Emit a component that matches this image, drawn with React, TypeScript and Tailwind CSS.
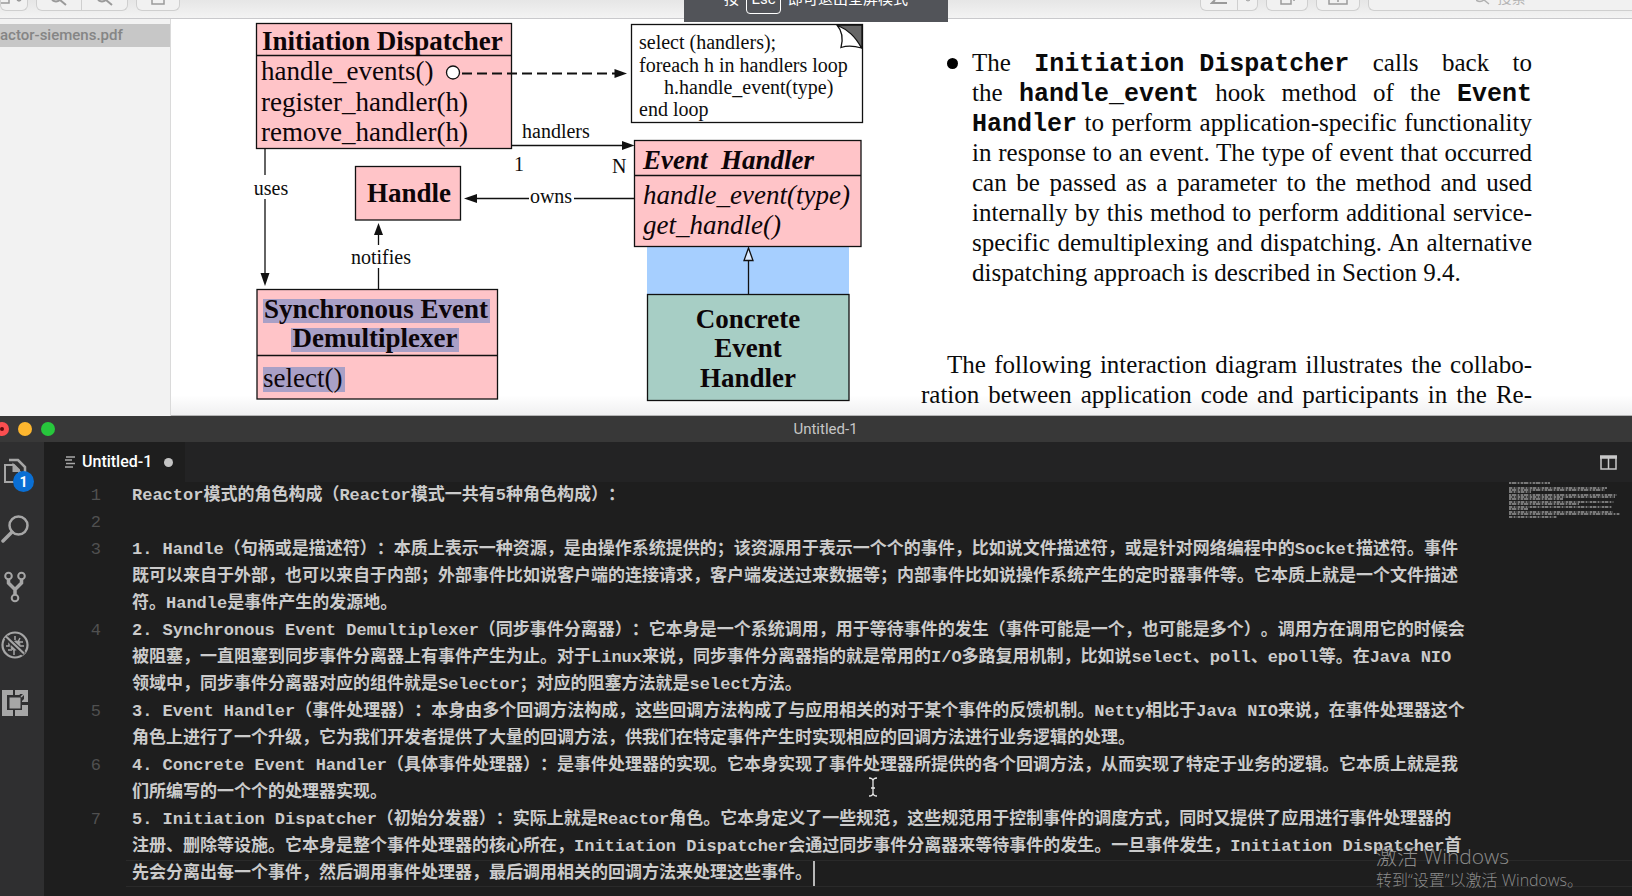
import React from "react";

const serif = "font-['Liberation_Serif',serif]";
const mono = "font-['Liberation_Mono','Noto_Sans_CJK_SC',monospace]";
const sans = "font-[Roboto,'Noto_Sans_CJK_SC',sans-serif]";

type NoteLine = { number: number; rows: string[] };

const NOTES: NoteLine[] = [
  { number: 1, rows: ["Reactor模式的角色构成（Reactor模式一共有5种角色构成）："] },
  { number: 2, rows: [""] },
  {
    number: 3,
    rows: [
      "1. Handle（句柄或是描述符）：本质上表示一种资源，是由操作系统提供的；该资源用于表示一个个的事件，比如说文件描述符，或是针对网络编程中的Socket描述符。事件",
      "既可以来自于外部，也可以来自于内部；外部事件比如说客户端的连接请求，客户端发送过来数据等；内部事件比如说操作系统产生的定时器事件等。它本质上就是一个文件描述",
      "符。Handle是事件产生的发源地。",
    ],
  },
  {
    number: 4,
    rows: [
      "2. Synchronous Event Demultiplexer（同步事件分离器）：它本身是一个系统调用，用于等待事件的发生（事件可能是一个，也可能是多个）。调用方在调用它的时候会",
      "被阻塞，一直阻塞到同步事件分离器上有事件产生为止。对于Linux来说，同步事件分离器指的就是常用的I/O多路复用机制，比如说select、poll、epoll等。在Java NIO",
      "领域中，同步事件分离器对应的组件就是Selector；对应的阻塞方法就是select方法。",
    ],
  },
  {
    number: 5,
    rows: [
      "3. Event Handler（事件处理器）：本身由多个回调方法构成，这些回调方法构成了与应用相关的对于某个事件的反馈机制。Netty相比于Java NIO来说，在事件处理器这个",
      "角色上进行了一个升级，它为我们开发者提供了大量的回调方法，供我们在特定事件产生时实现相应的回调方法进行业务逻辑的处理。",
    ],
  },
  {
    number: 6,
    rows: [
      "4. Concrete Event Handler（具体事件处理器）：是事件处理器的实现。它本身实现了事件处理器所提供的各个回调方法，从而实现了特定于业务的逻辑。它本质上就是我",
      "们所编写的一个个的处理器实现。",
    ],
  },
  {
    number: 7,
    rows: [
      "5. Initiation Dispatcher（初始分发器）：实际上就是Reactor角色。它本身定义了一些规范，这些规范用于控制事件的调度方式，同时又提供了应用进行事件处理器的",
      "注册、删除等设施。它本身是整个事件处理器的核心所在，Initiation Dispatcher会通过同步事件分离器来等待事件的发生。一旦事件发生，Initiation Dispatcher首",
      "先会分离出每一个事件，然后调用事件处理器，最后调用相关的回调方法来处理这些事件。",
    ],
  },
];

function PdfToolbar() {
  const button = "flex h-[11px] items-start justify-center rounded-b-md border border-t-0 border-[#cfcfcf] bg-[#f1f1f1] text-[#9a9a9a]";
  return (
    <header className="flex h-[19px] items-start gap-2 overflow-hidden border-b border-[#c9c9cc] bg-linear-to-b from-[#e6e6e6] to-[#f3f3f3]">
      <button aria-label="View mode" className={`${button} w-[28px]`}>
        <svg width="26" height="6" fill="none" stroke="currentColor" strokeWidth="1.5">
          <path d="M0 3H8V0M16 0l2 1 2-1" />
        </svg>
      </button>
      <div className="flex">
        <button aria-label="Zoom out" className={`${button} w-[46px] rounded-br-none`}>
          <svg width="20" height="6" fill="none" stroke="currentColor" strokeWidth="2">
            <path d="M3 0Q7 3 11 0L17 5" />
          </svg>
        </button>
        <button aria-label="Zoom in" className={`${button} w-[46px] rounded-bl-none border-l-0`}>
          <svg width="20" height="6" fill="none" stroke="currentColor" strokeWidth="2">
            <path d="M3 0Q7 3 11 0L17 5" />
          </svg>
        </button>
      </div>
      <button aria-label="Share" className={`${button} w-[44px]`}>
        <svg width="14" height="6" fill="none" stroke="currentColor" strokeWidth="1.5">
          <path d="M1 0V4H13V0" />
        </svg>
      </button>
      <div className="flex-1" />
      <div className="flex">
        <button aria-label="Highlight" className={`${button} w-[38px] rounded-br-none`}>
          <svg width="18" height="6" fill="none" stroke="currentColor" strokeWidth="2">
            <path d="M5 0L2 3H17" />
          </svg>
        </button>
        <button aria-label="Highlight colour" className={`${button} w-[20px] rounded-bl-none border-l-0`}>
          <svg width="8" height="6" fill="none" stroke="currentColor">
            <path d="M2 0l2 1 2-1" />
          </svg>
        </button>
      </div>
      <button aria-label="Rotate" className={`${button} w-[42px]`}>
        <svg width="18" height="6" fill="none" stroke="currentColor" strokeWidth="1.5">
          <path d="M3 0V4H13V0M16 0v1" />
        </svg>
      </button>
      <button aria-label="Markup" className={`${button} w-[44px]`}>
        <svg width="20" height="6" fill="none" stroke="currentColor" strokeWidth="1.5">
          <path d="M1 0V4H19V0M10 0v2" />
        </svg>
      </button>
      <button aria-label="搜索" className={`${button} w-[264px] gap-2 overflow-hidden rounded-br-none border-r-0`}>
        <svg width="14" height="6" fill="none" stroke="#b0b0b0" strokeWidth="1.5">
          <path d="M0 0Q4 3 8 0L13 4" />
        </svg>
        <span className={`${sans} flex h-[6px] items-end text-sm leading-[16px] text-[#b4b4b4]`}>搜索</span>
      </button>
    </header>
  );
}

function ClassDiagram() {
  const pink = "#ffc4c8";
  return (
    <svg viewBox="171 19 720 396" width="720" height="396" className={`${serif} shrink-0`} role="img" aria-label="Reactor class diagram">
      <g stroke="#111" strokeWidth="1.3">
        <rect x="647" y="247" width="202" height="47" fill="#a6cfff" stroke="none" />
        <rect x="256.5" y="23.5" width="255" height="125" fill={pink} />
        <path d="M256.5 55.5H511.5" />
        <rect x="355.5" y="166.5" width="105" height="53.500" fill={pink} />
        <rect x="257" y="289.500" width="240.500" height="109.500" fill={pink} />
        <path d="M257 355.500H497.500" />
        <rect x="631.500" y="24.500" width="231" height="98" fill="#fff" />
        <rect x="634.500" y="140.500" width="226.500" height="106" fill={pink} />
        <path d="M634.500 175.500H861" />
        <rect x="647.500" y="294.500" width="201.500" height="106" fill="#a7cec5" />
      </g>

      <g stroke="#111" strokeWidth="1.3" fill="none">
        <path d="M462 73.500H616" strokeWidth="1.8" strokeDasharray="10 5" />
        <path d="M512 145.500H624" />
        <path d="M475 198.500H529M574 198.500H634" />
        <path d="M265 148V175M265 199V276" />
        <path d="M378.500 233V245M378.500 268V289" />
        <path d="M748.500 261V294" />
        <path d="M748.500 248L744 260.500H753Z" fill="#dcebff" />
        <circle cx="453" cy="72.500" r="6.500" fill="#fff" />
        <path d="M837 25H862V48Z" fill="#666" />
        <path d="M837 25C843 32 843 40 841 47.500C848 45 855 46 861.500 48C855 36 848 30 837 25Z" fill="#fff" />
      </g>
      <g fill="#111">
        <path d="M627 73.500L614.500 69V78Z" />
        <path d="M634.500 145.500L622 141V150Z" />
        <path d="M464 198.500L477 194V203Z" />
        <path d="M265 286L260.500 273H269.500Z" />
        <path d="M378.500 223L374 235H383Z" />
      </g>

      <g fill="#a9a0c6">
        <rect x="263" y="299" width="227" height="24" />
        <rect x="291" y="328" width="168" height="24" />
        <rect x="263" y="367" width="82" height="25" />
      </g>

      <g fill="#0d0508" fontSize="27">
        <g fontWeight="700">
          <text x="262" y="50">Initiation Dispatcher</text>
          <text x="409" y="202" textAnchor="middle">Handle</text>
          <text x="376" y="318" textAnchor="middle">Synchronous Event</text>
          <text x="375" y="347" textAnchor="middle">Demultiplexer</text>
          <text x="643" y="169" fontStyle="italic">{"Event\u00a0 Handler"}</text>
          <text x="748" y="328" textAnchor="middle">Concrete</text>
          <text x="748" y="357" textAnchor="middle">Event</text>
          <text x="748" y="387" textAnchor="middle">Handler</text>
        </g>
        <text x="261" y="80">handle_events()</text>
        <text x="261" y="111">register_handler(h)</text>
        <text x="261" y="141">remove_handler(h)</text>
        <text x="263" y="387">select()</text>
        <g fontStyle="italic">
          <text x="643" y="204">handle_event(type)</text>
          <text x="643" y="234">get_handle()</text>
        </g>
      </g>
      <g fill="#0d0d0d" fontSize="20">
        <text x="639" y="49">select (handlers);</text>
        <text x="639" y="72">foreach h in handlers loop</text>
        <text x="664" y="94">h.handle_event(type)</text>
        <text x="639" y="116">end loop</text>
        <text x="522" y="138">handlers</text>
        <text x="514" y="171">1</text>
        <text x="612" y="173">N</text>
        <text x="551" y="203" textAnchor="middle">owns</text>
        <text x="271" y="195" textAnchor="middle">uses</text>
        <text x="381" y="264" textAnchor="middle">notifies</text>
      </g>
    </svg>
  );
}

function Code({ children }: { children: React.ReactNode }) {
  return (
    <code className="inline-block font-['Liberation_Mono',monospace] text-[25px] leading-none font-bold [text-align-last:left]">
      {children}
    </code>
  );
}

function PaperText() {
  const line = "block whitespace-nowrap [text-align-last:justify]";
  return (
    <article className={`${serif} flex min-w-0 flex-1 flex-col pt-[29px] pr-[100px] pl-[30px] text-[25px] leading-[30px] text-[#0a0a0a]`}>
      <ul>
        <li className="flex pl-[26px]">
          <span className="mt-[10px] mr-[14px] size-[11px] shrink-0 rounded-full bg-black" />
          <p className="min-w-0 flex-1">
            <span className={line}>The <Code>Initiation Dispatcher</Code> calls back to</span>
            <span className={line}>the <Code>handle_event</Code> hook method of the <Code>Event</Code></span>
            <span className={line}><Code>Handler</Code> to perform application-specific functionality</span>
            <span className={line}>in response to an event. The type of event that occurred</span>
            <span className={line}>can be passed as a parameter to the method and used</span>
            <span className={line}>internally by this method to perform additional service-</span>
            <span className={line}>specific demultiplexing and dispatching. An alternative</span>
            <span className="block whitespace-nowrap">dispatching approach is described in Section 9.4.</span>
          </p>
        </li>
      </ul>
      <p className="mt-[62px]">
        <span className={`${line} pl-[26px]`}>The following interaction diagram illustrates the collabo-</span>
        <span className={line}>ration between application code and participants in the Re-</span>
      </p>
    </article>
  );
}

function PdfViewer() {
  return (
    <section>
      <PdfToolbar />
      <div className="flex">
        <aside className="w-[171px] shrink-0 overflow-hidden border-r border-[#dadada] bg-[#f2f2f2] pt-[5px]">
          <a href="#document" className={`${sans} block bg-[#c7c7c7] text-[15px] leading-[23px] font-medium text-[#858585]`}>
            actor-siemens.pdf
          </a>
        </aside>
        <div className="flex min-w-0 flex-1 overflow-hidden border-b border-[#b5b5b5] bg-linear-to-b from-white from-95% to-[#f0f0f1]">
          <ClassDiagram />
          <PaperText />
        </div>
      </div>
    </section>
  );
}

function FullscreenHint() {
  return (
    <div className={`${sans} absolute top-0 left-[684px] flex h-[22px] w-[264px] items-end justify-center overflow-hidden bg-[#525459] pb-2 text-[15px] text-white`}>
      <div className="flex h-[34px] shrink-0 items-center gap-[7px]">
        <span className="pt-1">按</span>
        <kbd className={`${sans} flex h-[34px] w-[35px] items-center justify-center rounded border border-white pt-1`}>Esc</kbd>
        <span className="pt-1">即可退出全屏模式</span>
      </div>
    </div>
  );
}

function ActivityBar() {
  const item = "flex h-[58px] w-full items-center pl-px text-[#a6a6a6]";
  return (
    <nav aria-label="Activity bar" className="w-11 shrink-0 bg-[#2f2f30]">
      <button aria-label="Explorer, 1 unsaved" className={`${item} relative`}>
        <svg width="28" height="28" viewBox="0 0 28 28" fill="none" stroke="currentColor" strokeWidth="2">
          <path d="M4 8H13L18 13V25H4Z" />
          <path d="M12.500 8V14H18Z" fill="currentColor" />
          <path d="M8 3H17L24 10V20" strokeWidth="2.500" />
        </svg>
        <span className={`${sans} absolute top-[29px] left-[13px] flex size-[21px] items-center justify-center rounded-full bg-[#0a6fd4] text-sm font-bold text-white`}>
          1
        </span>
      </button>
      <button aria-label="Search" className={item}>
        <svg width="28" height="28" viewBox="0 0 28 28" fill="none" stroke="currentColor" strokeWidth="2.500">
          <circle cx="17.500" cy="10.500" r="9" />
          <path d="M11 17L2 26" strokeWidth="3.500" strokeLinecap="round" />
        </svg>
      </button>
      <button aria-label="Source control" className={item}>
        <svg width="28" height="32" viewBox="0 0 28 32" fill="none" stroke="currentColor" strokeWidth="2">
          <circle cx="7.500" cy="5" r="3.300" />
          <circle cx="20.500" cy="5" r="3.300" />
          <circle cx="14" cy="27" r="3.300" />
          <path d="M7.500 9V12L14 18.500V23M20.500 9V12L14 18.500" strokeWidth="3.500" />
        </svg>
      </button>
      <button aria-label="Debug" className={item}>
        <svg width="28" height="28" viewBox="0 0 28 28" fill="none" stroke="currentColor">
          <circle cx="14" cy="14" r="12.500" strokeWidth="2.200" />
          <ellipse cx="14.500" cy="14.500" rx="4" ry="5" fill="currentColor" transform="rotate(40 14.500 14.500)" />
          <path d="M14 5V9M19 7L17 11H22M18 15H23M8 11V15H5M7 19H11M13 19V24M18 18L19 22" strokeWidth="1.500" />
          <path d="M5 6L23 23" stroke="#2f2f30" strokeWidth="5" />
          <path d="M5 5.500L23 22.500" strokeWidth="2.200" />
        </svg>
      </button>
      <button aria-label="Extensions" className={item}>
        <svg width="28" height="28" viewBox="0 0 28 28" fill="currentColor">
          <path d="M1 1H12V6H6V21H12V27H1ZM14 1H27V13H21V16H27V27H14V21H20V6H14Z" />
          <rect x="7" y="7" width="14" height="14" fill="#2f2f30" />
          <rect x="8.500" y="8.500" width="11" height="11" />
          <path d="M19 5H23V10L21 12V7H18Z" fill="#2f2f30" />
          <path d="M20 8L24 4" stroke="currentColor" strokeWidth="1.500" />
        </svg>
      </button>
    </nav>
  );
}

const MINIMAP: [number, number][] = [
  [1, 41], [6, 98], [8, 96], [10, 22], [13, 108], [15, 106], [17, 54],
  [20, 105], [22, 70], [25, 103], [27, 19], [30, 104], [32, 111], [35, 48],
];

function Minimap() {
  return (
    <svg width="123" height="38" className="shrink-0" aria-hidden="true">
      {MINIMAP.map(([y, width], i) => (
        <g key={i}>
          <path d={`M0 ${y}H${width}`} stroke="#4c4c4c" strokeWidth="1.500" />
          <path d={`M0 ${y}H${width}`} stroke="#8a8a8a" strokeWidth="1.500" strokeDasharray={i % 2 ? "3 2 1 3 2 1" : "2 1 4 2 1 2"} />
        </g>
      ))}
    </svg>
  );
}

function Editor() {
  const last = NOTES[NOTES.length - 1].number;
  return (
    <div className="flex pb-[10px]">
      <ol className={`${mono} min-w-0 flex-1 text-[17px] leading-[27px] text-[#cbcbcb] [text-spacing-trim:space-all]`}>
        {NOTES.map((note) => (
          <li key={note.number} className="flex">
            <span className="w-[57px] shrink-0 text-right text-[#505050]">{note.number}</span>
            <div className="ml-[25px] min-w-0 flex-1 font-semibold">
              {note.rows.map((row, i) => {
                const current = note.number === last && i === note.rows.length - 1;
                return (
                  <div
                    key={i}
                    className={
                      current
                        ? "-mr-[123px] flex h-[27px] items-center border-y border-[#2a2a2a] pl-[6px] leading-[25px] whitespace-nowrap"
                        : "h-[27px] pl-[6px] whitespace-nowrap"
                    }
                  >
                    {row}
                    {current && <span className="ml-px h-[25px] w-[2px] shrink-0 bg-[#b8b8b8]" />}
                  </div>
                );
              })}
            </div>
          </li>
        ))}
      </ol>
      <Minimap />
    </div>
  );
}

function CodeWindow() {
  return (
    <section className="flex flex-1 flex-col bg-[#1e1e1e]">
      <header className="flex h-[26px] items-center overflow-hidden bg-[#383838]">
        <div className="-ml-[5px] flex flex-1 gap-[9px]">
          <button aria-label="Close" className="flex size-[14px] items-center justify-center rounded-full bg-[#fb4e50]">
            <span className="size-1 rounded-full bg-[#5c0a0c]" />
          </button>
          <button aria-label="Minimize" className="size-[14px] rounded-full bg-[#fdb62e]" />
          <button aria-label="Zoom window" className="size-[14px] rounded-full bg-[#27c73c]" />
        </div>
        <h1 className={`${sans} text-[15px] leading-5 text-[#c6c6c6]`}>Untitled-1</h1>
        <div className="-mr-[24px] flex-1" />
      </header>
      <div className="flex flex-1">
        <ActivityBar />
        <div className="min-w-0 flex-1">
          <div className="flex h-10 items-center justify-between bg-[#232324] pr-[15px]">
            <button className={`${sans} flex h-full items-center bg-[#1e1e1e] pr-3 pl-[21px] text-base font-medium text-white`}>
              <svg width="11" height="12" className="mr-[6px]" stroke="#a8a8a8" strokeWidth="1.300" aria-hidden="true">
                <path d="M1 1H10M0 4H7M1 7.500H10M0 11H8" />
              </svg>
              Untitled-1
              <span className="ml-3 size-[9px] rounded-full bg-[#c4c4c4]" />
            </button>
            <button aria-label="Split editor">
              <svg width="17" height="15" viewBox="0 0 17 15" fill="none" stroke="#c8c8c8" strokeWidth="1.500">
                <path d="M1 1V14H16V1M8.500 2V14" />
                <path d="M0 2H17" strokeWidth="3.500" />
              </svg>
            </button>
          </div>
          <Editor />
        </div>
      </div>
    </section>
  );
}

export default function App() {
  return (
    <main className="relative flex min-h-screen flex-col overflow-hidden bg-[#1e1e1e]">
      <PdfViewer />
      <CodeWindow />
      <FullscreenHint />
      <div className="pointer-events-none absolute right-[49px] bottom-[5px] font-['Open_Sans','Noto_Sans_CJK_SC',sans-serif] font-light text-[#8c8c8c]">
        <p className="text-[21px] leading-6">激活 Windows</p>
        <p className="text-[16px] leading-6">转到“设置”以激活 Windows。</p>
      </div>
      <svg width="10" height="20" className="pointer-events-none absolute top-[777px] left-[868px]" fill="none" stroke="#e8e8e8" strokeWidth="1.300" aria-hidden="true">
        <path d="M1 1Q5 1 5 4V16Q5 19 1 19M9 1Q5 1 5 4M9 19Q5 19 5 16M3 11H7" />
      </svg>
    </main>
  );
}
